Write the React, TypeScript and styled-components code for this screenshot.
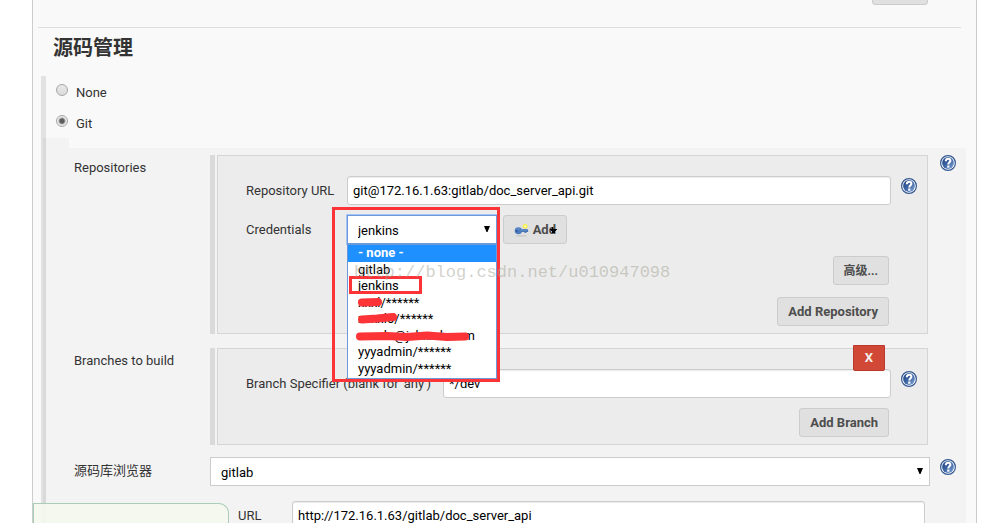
import React from "react";
import styled, { createGlobalStyle, css } from "styled-components";

const RED = "#fc3438";

const GlobalStyle = createGlobalStyle`
  * { box-sizing: border-box; }
  body {
    margin: 0;
    background: #fff;
    color: #333;
    font: 13px/16px Roboto, "Noto Sans CJK SC", sans-serif;
  }
  button, input, select { font: inherit; margin: 0; }
`;

const Page = styled.div`
  position: relative;
  height: 100vh;
  overflow: hidden;
  padding: 0 21px 0 32px;
`;

const Panel = styled.main`
  min-height: 100%;
  background: #f9f9f9;
  border: solid #ccc;
  border-width: 0 1px;
  padding: 0 10px 0 5px;
`;

const Button = styled.button<{ $small?: boolean }>`
  height: 29px;
  padding: 0 10px;
  border: 1px solid #ccc;
  border-radius: 3px;
  background: #e0e0e0;
  color: #4d4d4d;
  font-size: ${(p) => (p.$small ? 12 : 13)}px;
  font-weight: 700;
  line-height: 26px;
  white-space: nowrap;
`;

const TopBar = styled.div`
  display: flex;
  justify-content: flex-end;
  align-items: flex-end;
  height: 28px;
  margin-right: 5px;
  padding: 0 33px 22px 0;
  border-bottom: 1px solid #ddd;

  ${Button} { flex: none; }
`;

const Heading = styled.h1`
  margin: 0;
  padding: 4px 0 12px 15px;
  font-size: 20px;
  line-height: 32px;
  font-weight: 700;
`;

const ScmBlock = styled.section`
  margin-left: 3px;
  border-left: 5px solid #e2e2e2;
`;

const RadioRow = styled.label`
  display: flex;
  gap: 8px;
  height: 31px;
  padding-left: 10px;
  line-height: 34px;
`;

const Radio = styled.input`
  appearance: none;
  width: 12px;
  height: 12px;
  margin-top: 8px;
  border: 1px solid #a6a6a6;
  border-radius: 50%;
  background: linear-gradient(#e8e8e8, #dcdcdc);

  &:checked {
    background: radial-gradient(circle, #5c5c5c 0 2px, #ececec 4px);
  }
`;

const nested = css`
  margin-left: -3px;
  border-left: 3px solid #d9d9d9;
  background: #f3f3f3;
`;

const NestedTab = styled.div`
  ${nested}
  width: 26px;
  height: 10px;
`;

const NestedBody = styled.div`
  ${nested}
  padding: 7px 10px 0 28px;
`;

const Entry = styled.div<{ $after: number }>`
  display: flex;
  align-items: flex-start;
  margin-bottom: ${(p) => p.$after}px;
`;

const EntryLabel = styled.label<{ $top: number }>`
  flex: none;
  width: 136px;
  padding-top: ${(p) => p.$top}px;
`;

const Group = styled.div`
  flex: 1;
  min-width: 0;
  margin-right: 12px;
  padding-left: 2px;
  border-left: 5px solid #dadada;
`;

const GroupBox = styled.div`
  position: relative;
  padding: 20px 10px 7px 28px;
  border: 1px solid #d5d5d5;
  background: #ececec;
`;

const Field = styled.div<{ $after: number }>`
  display: flex;
  align-items: flex-start;
  margin-bottom: ${(p) => p.$after}px;
`;

const FieldLabel = styled.label<{ $width: number }>`
  flex: none;
  width: ${(p) => p.$width}px;
  line-height: 29px;
  white-space: nowrap;
`;

const TextInput = styled.input`
  flex: 1;
  min-width: 0;
  height: 29px;
  padding: 0 5px;
  border: 1px solid #ccc;
  border-radius: 3px;
  background: #fff;
  color: #000;
  box-shadow: inset 0 1px 1px rgba(0, 0, 0, 0.08);
`;

const Actions = styled.div<{ $after?: number }>`
  display: flex;
  justify-content: flex-end;
  margin: 0 28px ${(p) => p.$after ?? 0}px 0;
`;

const DeleteButton = styled.button`
  position: absolute;
  top: -4px;
  right: 42px;
  width: 32px;
  height: 26px;
  padding: 0;
  border: 1px solid #b93a2d;
  border-radius: 0 0 2px 2px;
  background: #d14836;
  color: #f4f0f0;
  font-weight: 700;
`;

const HelpLink = styled.a<{ $top: number }>`
  flex: none;
  width: 16px;
  height: 16px;
  margin: ${(p) => p.$top}px 0 0 10px;
  svg { display: block; }
`;

const EntryHelp = styled(HelpLink)`
  margin-left: 0;
`;

const EntryHelpSpace = styled.div`
  flex: none;
  width: 16px;
`;

const SelectWrap = styled.div<{ $open?: boolean }>`
  position: relative;
  ${(p) => (p.$open ? "flex: none; width: 150px; margin-right: 6px;" : "flex: 1; margin-right: 10px;")}
`;

const Select = styled.select<{ $open?: boolean }>`
  display: block;
  appearance: none;
  width: 100%;
  height: 29px;
  padding: 2px 20px 0 10px;
  border: 1px solid ${(p) => (p.$open ? "#6c98dc" : "#ccc")};
  border-radius: 0;
  background: #fff;
  color: #000;
  outline: ${(p) => (p.$open ? "1px solid #a5c4f3" : "none")};
`;

const Arrow = styled.svg`
  position: absolute;
  top: 11px;
  right: 7px;
`;

const Menu = styled.ul`
  position: absolute;
  z-index: 2;
  top: 29px;
  left: 0;
  right: 0;
  margin: 0;
  padding: 0 0 1px;
  list-style: none;
  border: 1px solid #6c98dc;
  background: #fff;
  color: #000;
`;

const MenuItem = styled.li<{ $active: boolean }>`
  height: 17px;
  padding-left: 10px;
  line-height: 15px;
  white-space: nowrap;
  &:nth-child(even) { height: 16px; }
  ${(p) => p.$active && "background: #1e90ff; color: #fff; font-weight: 700;"}
`;

const Scribbles = styled.svg`
  position: absolute;
  z-index: 3;
  top: 80px;
  left: 5px;
`;

const Marker = styled.div`
  position: absolute;
  z-index: 3;
  top: -8px;
  left: -15px;
  width: 168px;
  height: 175px;
  border: 3px solid ${RED};
  pointer-events: none;
`;

const ItemMarker = styled(Marker)`
  top: 61px;
  left: 2px;
  width: 73px;
  height: 18px;
`;

const AddButton = styled(Button)`
  position: relative;
  display: flex;
  align-items: center;
  gap: 4px;
  width: 64px;
`;

const AddArrow = styled.svg`
  position: absolute;
  top: 11px;
  right: 9px;
`;

const UrlRow = styled(Field)`
  margin: 0 31px 0 164px;
`;

const SaveBar = styled.footer`
  position: absolute;
  left: 33px;
  bottom: 0;
  width: 196px;
  height: 20px;
  border: 1px solid #a9cdb8;
  border-bottom: 0;
  border-top-right-radius: 10px;
  background: rgba(245, 249, 239, 0.92);
`;

const Watermark = styled.div`
  position: absolute;
  z-index: 4;
  top: 263px;
  left: 354px;
  color: rgba(165, 165, 150, 0.5);
  font: 17px/20px "Liberation Mono", monospace;
  pointer-events: none;
`;

function HelpIcon() {
  return (
    <svg width="16" height="16" viewBox="0 0 16 16" aria-hidden="true">
      <defs>
        <linearGradient id="helpFill" x1="0" y1="0" x2="1" y2="1">
          <stop offset="0" stopColor="#1c3f7c" />
          <stop offset="0.5" stopColor="#3f66a5" />
          <stop offset="1" stopColor="#86a9d8" />
        </linearGradient>
      </defs>
      <circle cx="8" cy="8" r="7.4" fill="#fff" stroke="#31578f" strokeWidth="1.2" />
      <circle cx="8" cy="8" r="5.9" fill="url(#helpFill)" />
      <path d="M5.8 6.2C5.8 4.5 6.7 3.7 8.1 3.7c1.500 0 2.300.8 2.300 2 0 1.600-2.100 1.700-2.100 3.800" fill="none" stroke="#fff" strokeWidth="2" />
      <rect x="7.2" y="10.5" width="2.2" height="2.2" fill="#fff" />
    </svg>
  );
}

function Help({ top, outer }: { top: number; outer?: boolean }) {
  const Link = outer ? EntryHelp : HelpLink;
  return (
    <Link href="#help" $top={top} aria-label="Help">
      <HelpIcon />
    </Link>
  );
}

function KeyIcon() {
  return (
    <svg width="16" height="16" viewBox="0 0 16 16" aria-hidden="true">
      <ellipse cx="8" cy="14.5" rx="6" ry="1" fill="#cbcbcb" />
      <circle cx="12.2" cy="4" r="2.6" fill="#f6ee3b" />
      <circle cx="12.2" cy="4" r="1.2" fill="#fffccf" />
      <path d="M7 7h7.5l1 1.2v2h-2v1h-2v-1H7z" fill="#4675b8" />
      <ellipse cx="4.8" cy="8.9" rx="4" ry="3.8" fill="#4c7bbd" />
      <path d="M2.5 7.6c1-1.500 3.500-1.500 4.500 0M7.500 8H14" stroke="#7099d0" fill="none" />
      <circle cx="2.8" cy="9.1" r="1" fill="#2c5594" />
    </svg>
  );
}

function DownArrow() {
  return (
    <Arrow width="6" height="6" viewBox="0 0 6 6" aria-hidden="true">
      <path d="M0 0h6L3.5 6h-1z" fill="#000" />
    </Arrow>
  );
}

const credentials = [
  "- none -",
  "gitlab",
  "jenkins",
  "xxxl/******",
  "xxxxlo/******",
  "xxxxlo@jxbxxdxcom",
  "yyyadmin/******",
  "yyyadmin/******",
];

export default function App() {
  return (
    <Page>
      <GlobalStyle />
      <Panel>
        <TopBar>
          <Button type="button" $small>高级...</Button>
        </TopBar>
        <Heading>源码管理</Heading>
        <ScmBlock>
          <RadioRow>
            <Radio type="radio" name="scm" />
            None
          </RadioRow>
          <RadioRow>
            <Radio type="radio" name="scm" defaultChecked />
            Git
          </RadioRow>
          <NestedTab />
          <NestedBody>
            <Entry $after={14}>
              <EntryLabel as="div" $top={5}>Repositories</EntryLabel>
              <Group>
                <GroupBox>
                  <Field $after={10}>
                    <FieldLabel $width={101} htmlFor="repo">Repository URL</FieldLabel>
                    <TextInput id="repo" defaultValue="git@172.16.1.63:gitlab/doc_server_api.git" />
                    <Help top={2} />
                  </Field>
                  <Field $after={12}>
                    <FieldLabel $width={101} htmlFor="credentials">Credentials</FieldLabel>
                    <SelectWrap $open>
                      <Select id="credentials" $open defaultValue="jenkins">
                        <option>jenkins</option>
                        <option>gitlab</option>
                      </Select>
                      <DownArrow />
                      <Menu>
                        {credentials.map((name, i) => (
                          <MenuItem key={i} $active={i === 0}>{name}</MenuItem>
                        ))}
                      </Menu>
                      <Marker />
                      <ItemMarker />
                      <Scribbles width="125" height="50" viewBox="0 0 125 50" aria-hidden="true">
                        <g fill="none" stroke={RED} strokeLinecap="round" strokeLinejoin="round">
                          <path d="M10 7.500L26 7" strokeWidth="8" />
                          <path d="M10 24.500L25 23.500L41 22" strokeWidth="8" />
                          <path d="M8 41.500L35 41L55 42L75 40.500L95 42L113 41.500" strokeWidth="8" />
                        </g>
                      </Scribbles>
                    </SelectWrap>
                    <AddButton type="button">
                      <KeyIcon />
                      Add
                      <AddArrow width="7" height="6" viewBox="0 0 7 6" aria-hidden="true">
                        <path d="M0 2h7v1H6v1H5v2H2V4H1V3H0zM2 0h1v2H2z" fill="#000" />
                      </AddArrow>
                    </AddButton>
                  </Field>
                  <Actions $after={12}>
                    <Button type="button" $small>高级...</Button>
                  </Actions>
                  <Actions>
                    <Button type="button">Add Repository</Button>
                  </Actions>
                </GroupBox>
              </Group>
              <Help top={0} outer />
            </Entry>
            <Entry $after={12}>
              <EntryLabel as="div" $top={5}>Branches to build</EntryLabel>
              <Group>
                <GroupBox>
                  <Field $after={10}>
                    <FieldLabel $width={197} htmlFor="branch">Branch Specifier (blank for 'any')</FieldLabel>
                    <TextInput id="branch" defaultValue="*/dev" />
                    <Help top={2} />
                  </Field>
                  <Actions>
                    <Button type="button">Add Branch</Button>
                  </Actions>
                  <DeleteButton type="button">X</DeleteButton>
                </GroupBox>
              </Group>
              <EntryHelpSpace />
            </Entry>
            <Entry $after={15}>
              <EntryLabel $top={6} htmlFor="browser">源码库浏览器</EntryLabel>
              <SelectWrap>
                <Select id="browser">
                  <option>gitlab</option>
                </Select>
                <DownArrow />
              </SelectWrap>
              <Help top={2} outer />
            </Entry>
            <UrlRow $after={0}>
              <FieldLabel $width={54} htmlFor="url">URL</FieldLabel>
              <TextInput id="url" defaultValue="http://172.16.1.63/gitlab/doc_server_api" />
            </UrlRow>
          </NestedBody>
        </ScmBlock>
      </Panel>
      <SaveBar />
      <Watermark>http://blog.csdn.net/u010947098</Watermark>
    </Page>
  );
}
